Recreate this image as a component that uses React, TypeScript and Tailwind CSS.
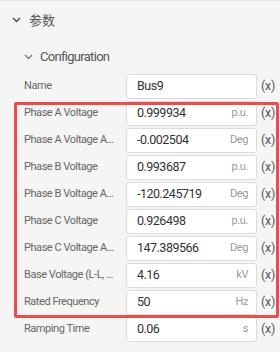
import React from "react";

const rows: { label: string; value: string; unit: string }[] = [
  { label: "Name", value: "Bus9", unit: "" },
  { label: "Phase A Voltage", value: "0.999934", unit: "p.u." },
  { label: "Phase A Voltage Angle", value: "-0.002504", unit: "Deg" },
  { label: "Phase B Voltage", value: "0.993687", unit: "p.u." },
  { label: "Phase B Voltage Angle", value: "-120.245719", unit: "Deg" },
  { label: "Phase C Voltage", value: "0.926498", unit: "p.u." },
  { label: "Phase C Voltage Angle", value: "147.389566", unit: "Deg" },
  { label: "Base Voltage (L-L, RMS)", value: "4.16", unit: "kV" },
  { label: "Rated Frequency", value: "50", unit: "Hz" },
  { label: "Ramping Time", value: "0.06", unit: "s" },
];

function Chevron({ className }: { className?: string }) {
  return (
    <svg className={className} width="9" height="6" viewBox="0 0 9 6" fill="none">
      <path d="M1 1l3.5 3.5L8 1" stroke="currentColor" strokeWidth="1.3" />
    </svg>
  );
}

export default function App() {
  return (
    <div
      className="relative w-[280px] h-[352px] overflow-hidden bg-[#f5f5f5] border-t border-[#e4e4e4]"
      style={{ fontFamily: "Roboto, 'Noto Sans CJK SC', sans-serif" }}
    >
      <div className="flex items-center h-[38px] pl-[12px] text-[#555]">
        <Chevron className="text-[#444]" />
        <span className="ml-[8px] text-[13px]" style={{ fontFamily: "'Noto Sans CJK SC', sans-serif" }}>
          参数
        </span>
      </div>
      <div className="flex items-center h-[35px] pl-[24px] text-[#555]">
        <Chevron className="text-[#777]" />
        <span className="ml-[7px] text-[13px] tracking-[-0.7px]">Configuration</span>
      </div>
      <div className="flex flex-col gap-[2px] pl-[24px]">
        {rows.map((r) => (
          <div key={r.label} className="flex items-center h-[25px]">
            <div className="w-[93px] mr-[9px] text-[11px] tracking-[-0.45px] text-[#666] truncate">{r.label}</div>
            <div className="flex items-center w-[131px] h-[25px] bg-white border border-[#dcdcdc] rounded-[3px] pl-[10px] pr-[8px]">
              <span className="text-[12.5px] tracking-[-0.5px] text-[#333]">{r.value}</span>
              <span className="ml-auto text-[11px] tracking-[-0.4px] text-[#999]">{r.unit}</span>
            </div>
            <span className="ml-[4px] text-[12.5px] tracking-[-0.3px] text-[#555]">(x)</span>
          </div>
        ))}
      </div>
      <div className="absolute left-[14px] top-[101px] w-[265px] h-[216px] border-[3px] border-[#ef4b4b] rounded-[2px] pointer-events-none" />
    </div>
  );
}
